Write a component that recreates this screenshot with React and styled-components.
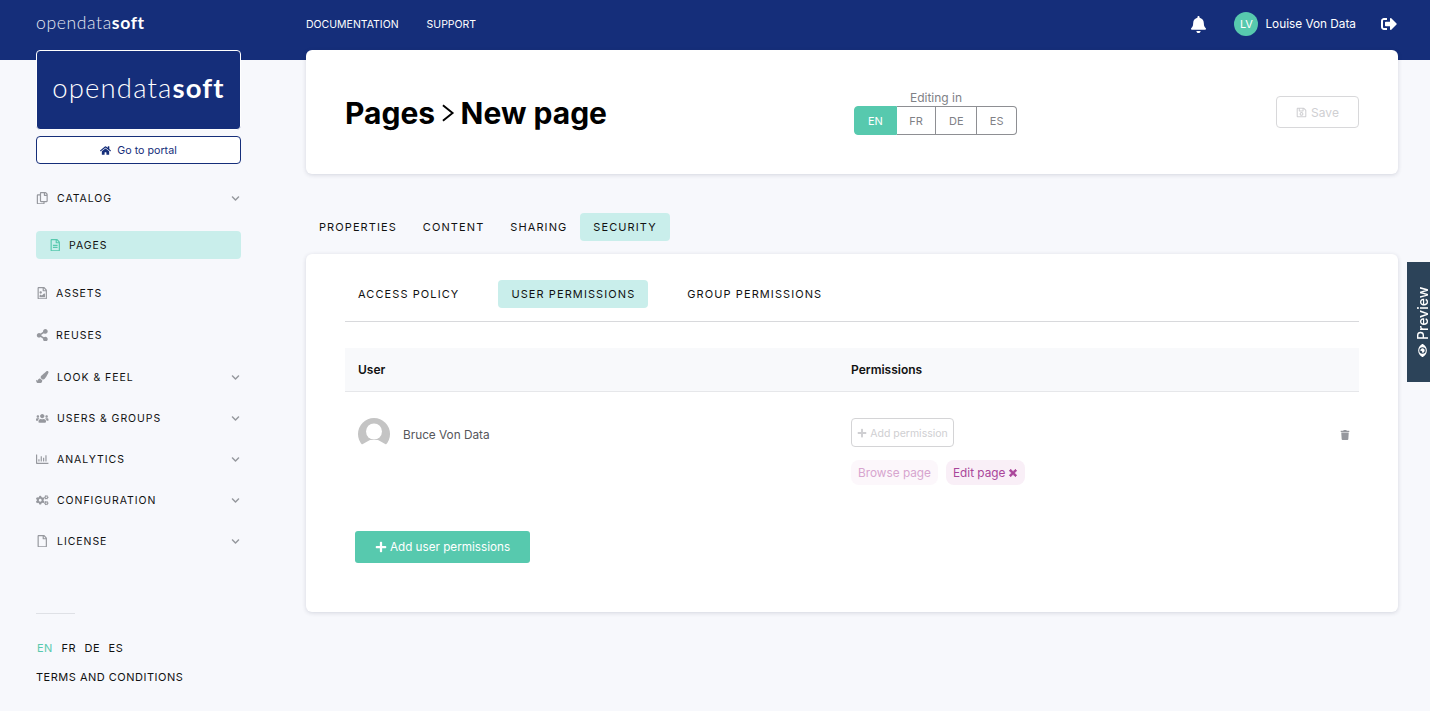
import React from 'react';
import styled, { createGlobalStyle } from 'styled-components';
import {
  FaBell, FaSignOutAlt, FaHome, FaRegCopy, FaRegFileAlt, FaRegFileImage, FaShareAlt, FaPaintBrush,
  FaUsers, FaRegChartBar, FaCogs, FaRegFile, FaChevronDown, FaRegSave, FaPlus, FaTimes, FaTrash, FaEye,
} from 'react-icons/fa';

const navy = '#152e7a';
const teal = '#57c9ae';
const tealLight = '#c9eeeb';

const GlobalStyle = createGlobalStyle`
  html, body { margin: 0; padding: 0; }
  body {
    background: #f7f8fc;
    font-family: Inter, "Liberation Sans", sans-serif;
    color: #111;
    height: 711px;
    overflow: hidden;
  }
  * { box-sizing: border-box; }
`;

const TopBar = styled.header`
  height: 60px;
  background: ${navy};
  padding: 0 33px 12px 36px;
  display: flex;
  align-items: center;
  color: #fff;
`;

const TopLogo = styled.div`
  width: 270px;
  padding-bottom: 3px;
  font-family: Lato, sans-serif;
  font-size: 17.6px;
  font-weight: 300;
  letter-spacing: 0.6px;
  color: #e4e7f0;
  b { font-weight: 700; color: #fff; }
`;

const TopLink = styled.a`
  font-size: 10.5px;
  font-weight: 400;
  margin-right: 28px;
  color: #fff;
`;

const TopRight = styled.div`
  margin-left: auto;
  display: flex;
  align-items: center;
  font-size: 11.8px;
`;

const Initials = styled.span`
  width: 24px;
  height: 24px;
  border-radius: 50%;
  background: ${teal};
  display: flex;
  align-items: center;
  justify-content: center;
  font-size: 11px;
  margin: 0 7px 0 27px;
`;

const LogoutIcon = styled(FaSignOutAlt)`
  font-size: 16px;
  margin-left: 25px;
`;

const Layout = styled.div`
  display: flex;
  margin-top: -10px;
  padding-left: 36px;
`;

const Sidebar = styled.aside`
  width: 205px;
  flex: none;
  margin-right: 65px;
`;

const LogoBox = styled.div`
  height: 80px;
  padding-bottom: 5px;
  background: ${navy};
  border: 1px solid #fff;
  border-radius: 4px;
  display: flex;
  align-items: center;
  justify-content: center;
  font-family: Lato, sans-serif;
  font-size: 27.5px;
  font-weight: 300;
  letter-spacing: 1.15px;
  color: #fff;
  b { font-weight: 700; }
`;

const PortalButton = styled.a`
  height: 28px;
  margin-top: 6px;
  border: 1px solid ${navy};
  border-radius: 4px;
  display: flex;
  align-items: center;
  justify-content: center;
  gap: 6px;
  font-size: 10.7px;
  color: ${navy};
  background: #fff;
`;

const NavItem = styled.div`
  height: 28px;
  margin-top: ${p => p.$top}px;
  padding-left: ${p => (p.$active ? 13 : 0)}px;
  display: flex;
  align-items: center;
  border-radius: 4px;
  background: ${p => (p.$active ? tealLight : 'transparent')};
  font-size: 10.5px;
  font-weight: 400;
  letter-spacing: 0.95px;
  color: #111;
`;

const NavIcon = styled.span`
  width: ${p => p.$w || 21}px;
  display: flex;
  align-items: center;
  font-size: 12.5px;
  color: ${p => (p.$active ? teal : '#96989e')};
`;

const Caret = styled(FaChevronDown)`
  margin-left: auto;
  margin-right: 1px;
  font-size: 9px;
  color: #96989e;
`;

const SideFoot = styled.div`
  margin-top: 58px;
  font-size: 11px;
  letter-spacing: 0.5px;
`;

const Rule = styled.div`
  width: 39px;
  height: 1px;
  background: #dfe1e6;
`;

const Langs = styled.div`
  margin-top: 27px;
  height: 14px;
  display: flex;
  gap: 8.5px;
  padding-left: 1px;
  line-height: 14px;
`;

const Lang = styled.span`
  color: ${p => (p.$active ? teal : '#111')};
`;

const Terms = styled.div`
  margin-top: 15px;
  line-height: 14px;
`;

const Main = styled.main`
  width: 1092px;
  flex: none;
`;

const Card = styled.section`
  background: #fff;
  border-radius: 6px;
  box-shadow: 0 1px 4px rgba(30, 40, 70, 0.16);
`;

const TitleCard = styled(Card)`
  height: 124px;
  padding: 2px 39px 0;
  display: flex;
  align-items: center;
`;

const Title = styled.h1`
  margin: 0;
  width: 262px;
  font-size: 30px;
  font-weight: 700;
  color: #000;
  white-space: nowrap;
  display: flex;
  align-items: center;
  gap: 6px;
`;

const EditingBlock = styled.div`
  width: 163px;
  margin-left: 247px;
`;

const Editing = styled.div`
  margin-bottom: 1px;
  padding-left: 1px;
  font-size: 12px;
  color: #808186;
  text-align: center;
  line-height: 14px;
`;

const LangSwitch = styled.div`
  display: flex;
  height: 29px;
  margin-top: 1px;
`;

const LangCell = styled.span`
  flex: ${p => p.$w} 0 0;
  display: flex;
  align-items: center;
  justify-content: center;
  font-size: 11px;
  color: ${p => (p.$active ? '#fff' : '#808186')};
  background: ${p => (p.$active ? teal : '#fff')};
  border: 1px solid ${p => (p.$active ? teal : '#8e8f93')};
  border-left-width: ${p => (p.$active ? 1 : 0)}px;
  &:first-child { border-radius: 4px 0 0 4px; }
  &:last-child { border-radius: 0 4px 4px 0; }
`;

const SaveButton = styled.button`
  width: 83px;
  height: 32px;
  margin: -2px 0 0 auto;
  border: 1px solid #d8d8da;
  border-radius: 4px;
  background: #fff;
  color: #cfcfd2;
  font: 400 12px Inter, sans-serif;
  display: flex;
  align-items: center;
  justify-content: center;
  gap: 4px;
`;

const Tabs = styled.nav`
  display: flex;
  gap: ${p => p.$gap}px;
`;

const Tab = styled.span`
  height: 28px;
  padding: 0 13px;
  display: flex;
  align-items: center;
  border-radius: 4px;
  font-size: 11px;
  font-weight: 400;
  letter-spacing: 1.09px;
  color: #111;
  background: ${p => (p.$active ? tealLight : 'transparent')};
`;

const MainTabs = styled(Tabs)`
  margin: 39px 0 13px;
`;

const ContentCard = styled(Card)`
  height: 358px;
  padding: 26px 39px 0;
`;

const SubTabs = styled(Tabs)`
  padding-bottom: 13px;
  border-bottom: 1px solid #d8d9dc;
`;

const TableHead = styled.div`
  margin-top: 26px;
  height: 44px;
  background: #f8f9fb;
  border-bottom: 1px solid #e6e7ea;
  display: grid;
  grid-template-columns: 493px 1fr;
  align-items: center;
  padding-left: 13px;
  font-size: 12px;
  font-weight: 600;
  color: #111;
`;

const Row = styled.div`
  display: grid;
  grid-template-columns: 493px 1fr 28px;
  padding: 26px 0 0 13px;
`;

const UserCell = styled.div`
  display: flex;
  align-items: center;
  gap: 13px;
  height: 32px;
  font-size: 11.8px;
  color: #55565a;
`;

const UserName = styled.span`
  padding-top: 2px;
`;

const Avatar = styled.svg`
  width: 32px;
  height: 32px;
`;

const AddPermission = styled.button`
  width: 103px;
  height: 29px;
  padding: 1px 0 0;
  border: 1px solid #d4d4d6;
  border-radius: 4px;
  background: #fff;
  color: #cfcfd2;
  font: 400 10.5px Inter, sans-serif;
  display: flex;
  align-items: center;
  justify-content: center;
  gap: 3px;
`;

const Tags = styled.div`
  display: flex;
  gap: 8px;
  margin-top: 13px;
`;

const Tag = styled.span`
  height: 25px;
  padding: 0 7px;
  border-radius: 8px;
  display: flex;
  align-items: center;
  gap: 3px;
  font-size: 11.8px;
  color: ${p => (p.$on ? '#a9459a' : '#d7a5cf')};
  background: ${p => (p.$on ? '#f9eff7' : '#fcf7fb')};
`;

const TagClose = styled(FaTimes)`
  font-size: 10px;
  stroke: currentColor;
  stroke-width: 50;
`;

const TrashCell = styled.div`
  height: 34px;
  display: flex;
  align-items: center;
  font-size: 10px;
  color: #96989e;
  padding-left: 9px;
`;

const AddUser = styled.button`
  width: 175px;
  height: 32px;
  margin: 46px 0 0 10px;
  padding: 0;
  border: none;
  border-radius: 3px;
  background: ${teal};
  color: #fff;
  font: 400 11.7px Inter, sans-serif;
  display: flex;
  align-items: center;
  justify-content: center;
  gap: 3px;
`;

const Preview = styled.div`
  position: fixed;
  top: 262px;
  right: 0;
  width: 23px;
  height: 120px;
  padding-right: 8px;
  background: #2c4359;
  color: #fff;
  display: flex;
  align-items: center;
  justify-content: center;
  gap: 4px;
  writing-mode: vertical-rl;
  transform: rotate(180deg);
  font-size: 14px;
  font-weight: 500;
`;

const PreviewEye = styled(FaEye)`
  font-size: 13px;
  transform: rotate(90deg);
`;

const nav = [
  { label: 'CATALOG', Icon: FaRegCopy, top: 20, caret: true },
  { label: 'PAGES', Icon: FaRegFileAlt, top: 19, active: true, w: 20 },
  { label: 'ASSETS', Icon: FaRegFileImage, top: 20, w: 20 },
  { label: 'REUSES', Icon: FaShareAlt, top: 14, w: 20 },
  { label: 'LOOK & FEEL', Icon: FaPaintBrush, top: 14, caret: true },
  { label: 'USERS & GROUPS', Icon: FaUsers, top: 13, caret: true },
  { label: 'ANALYTICS', Icon: FaRegChartBar, top: 13, caret: true },
  { label: 'CONFIGURATION', Icon: FaCogs, top: 13, caret: true },
  { label: 'LICENSE', Icon: FaRegFile, top: 13, caret: true },
];

export default function App() {
  return (
    <>
      <GlobalStyle />
      <TopBar>
        <TopLogo>opendata<b>soft</b></TopLogo>
        <TopLink>DOCUMENTATION</TopLink>
        <TopLink>SUPPORT</TopLink>
        <TopRight>
          <FaBell size={17} />
          <Initials>LV</Initials>
          Louise Von Data
          <LogoutIcon />
        </TopRight>
      </TopBar>
      <Layout>
        <Sidebar>
          <LogoBox>opendata<b>soft</b></LogoBox>
          <PortalButton><FaHome size={11} /> Go to portal</PortalButton>
          {nav.map(({ label, Icon, top, caret, active, w }) => (
            <NavItem key={label} $top={top} $active={active}>
              <NavIcon $active={active} $w={w}><Icon /></NavIcon>
              {label}
              {caret && <Caret />}
            </NavItem>
          ))}
          <SideFoot>
            <Rule />
            <Langs>
              <Lang $active>EN</Lang><Lang>FR</Lang><Lang>DE</Lang><Lang>ES</Lang>
            </Langs>
            <Terms>TERMS AND CONDITIONS</Terms>
          </SideFoot>
        </Sidebar>
        <Main>
          <TitleCard>
            <Title>Pages <svg width="14" height="22" viewBox="0 0 14 22"><path d="M2 3l10 8-10 8" fill="none" stroke="#000" strokeWidth="2" /></svg> New page</Title>
            <EditingBlock>
              <Editing>Editing in</Editing>
              <LangSwitch>
                <LangCell $active $w={42}>EN</LangCell>
                <LangCell $w={40}>FR</LangCell>
                <LangCell $w={41}>DE</LangCell>
                <LangCell $w={40}>ES</LangCell>
              </LangSwitch>
            </EditingBlock>
            <SaveButton><FaRegSave size={11} /> Save</SaveButton>
          </TitleCard>
          <MainTabs $gap={0}>
            <Tab>PROPERTIES</Tab>
            <Tab>CONTENT</Tab>
            <Tab>SHARING</Tab>
            <Tab $active>SECURITY</Tab>
          </MainTabs>
          <ContentCard>
            <SubTabs $gap={26}>
              <Tab>ACCESS POLICY</Tab>
              <Tab $active>USER PERMISSIONS</Tab>
              <Tab>GROUP PERMISSIONS</Tab>
            </SubTabs>
            <TableHead><span>User</span><span>Permissions</span></TableHead>
            <Row>
              <UserCell>
                <Avatar viewBox="0 0 32 32">
                  <circle cx="16" cy="16" r="16" fill="#c4c4c4" />
                  <circle cx="16" cy="13.5" r="8" fill="#fff" />
                  <path d="M3 27l9-5h8l9 5v5H3z" fill="#fff" />
                </Avatar>
                <UserName>Bruce Von Data</UserName>
              </UserCell>
              <div>
                <AddPermission><FaPlus size={10} /> Add permission</AddPermission>
                <Tags>
                  <Tag>Browse page</Tag>
                  <Tag $on>Edit page <TagClose /></Tag>
                </Tags>
              </div>
              <TrashCell><FaTrash /></TrashCell>
            </Row>
            <AddUser><FaPlus size={12} /> Add user permissions</AddUser>
          </ContentCard>
        </Main>
      </Layout>
      <Preview><PreviewEye /> Preview</Preview>
    </>
  );
}
